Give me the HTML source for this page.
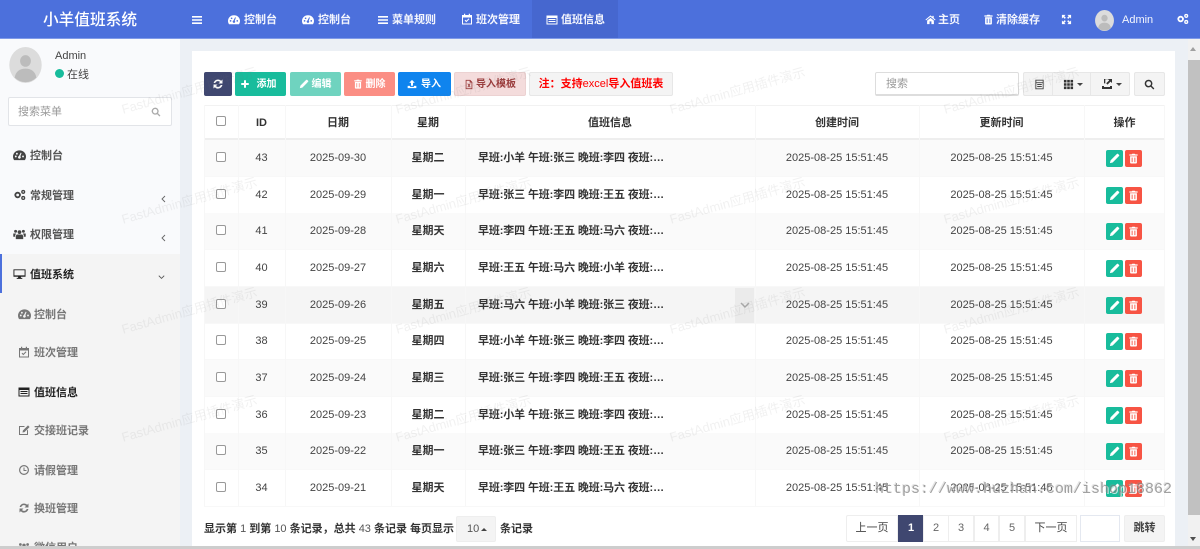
<!DOCTYPE html>
<html lang="zh-CN">
<head>
<meta charset="utf-8">
<title>小羊值班系统</title>
<style>
html,body{margin:0;padding:0;width:1200px;height:549px;overflow:hidden;background:#ecf0f5}
body{position:relative;font-family:"Liberation Sans","Noto Sans CJK SC",sans-serif;font-size:11px;color:#444}
.a,.r,.r span,.b,.h{position:absolute}
svg{position:absolute;fill:currentColor}
#hd{position:absolute;left:0;top:0;width:1200px;height:39px;background:#4c70dc;border-bottom:1px solid #7f9ae8;box-sizing:border-box;color:#fff}
#hd .h{top:12px;line-height:16px;font-size:11px;font-weight:700;white-space:nowrap;color:#f4f6fd}
#side{position:absolute;left:0;top:39px;width:180px;height:510px;background:#f9fafc;overflow:hidden}
.m{position:absolute;white-space:nowrap;font-size:11px;line-height:16px;font-weight:700;color:#555}
.sub{color:#777}
#panel{position:absolute;left:192px;top:51px;width:983px;height:495px;background:#fff}
.b{top:72px;height:24px;line-height:26px;border-radius:2px;text-align:center;color:#fff;font-weight:700;font-size:10px;box-sizing:border-box;white-space:nowrap}
.g{background:#f4f4f4;border:1px solid #e7e7e7;color:#444}
.r{left:204px;width:961px;height:37px;border-bottom:1px solid #f8f8f8;box-sizing:border-box}
.o{background:#fafafa}
.r span{top:0;line-height:37px;text-align:center;height:36px;font-size:11px;color:#444;white-space:nowrap}
.r .i{left:34px;width:47px}.r .d{left:81px;width:106px}.r .w{left:187px;width:74px;font-weight:700;color:#333}
.r .z{left:274px;width:200px;text-align:left;font-weight:700;color:#333;letter-spacing:-.13px}.r .c{left:551px;width:164px}.r .u{left:715px;width:165px}
.r .x{left:12px;top:12px;width:10px;height:10px;border:1px solid #999;border-radius:2px;box-sizing:border-box;background:#fff}
.r .e,.r .t{top:10px;width:17px;height:17px;border-radius:2px}
.r .e{left:902px;background:#18bc9c}.r .t{left:921px;background:#f75444}
.r .e svg,.r .t svg{left:3px;top:3px;color:#fff}
.v{position:absolute;top:105px;width:1px;height:401px;background:#f7f7f7}
.th{position:absolute;top:105px;height:35px;line-height:36px;text-align:center;font-weight:700;color:#333;font-size:11px}
.wm{position:absolute;font-size:13px;color:rgba(120,120,120,.10);transform:rotate(-15.700deg);transform-origin:0 50%;white-space:nowrap;line-height:16px;pointer-events:none}
.pg{position:absolute;top:515px;height:27px;line-height:24px;text-align:center;box-sizing:border-box;background:#fff;border:1px solid #eee;margin-left:-1px;color:#666;font-size:11px}
</style>
</head>
<body>
<svg width="0" height="0" style="position:absolute">
<defs>
<symbol id="dash" viewBox="0 0 14 12"><path d="M7 1a6.800 6.800 0 0 0-7 6.800c0 1.400.5 2.700 1.200 3.700h11.600c.7-1 1.200-2.300 1.200-3.700A6.800 6.800 0 0 0 7 1zM3 8.600a1 1 0 1 1 0-2 1 1 0 0 1 0 2zm1.200-3a1 1 0 1 1 0-2 1 1 0 0 1 0 2zM7 10a1.500 1.500 0 0 1-.6-2.900L8.300 3.400l.9.4-1.300 3.600A1.500 1.500 0 0 1 7 10zm3.800-1.400a1 1 0 1 1 0-2 1 1 0 0 1 0 2z"/></symbol>
<symbol id="bars" viewBox="0 0 12 12"><path d="M1 2h10v1.600H1zM1 5.200h10v1.600H1zM1 8.400h10V10H1z"/></symbol>
<symbol id="cal" viewBox="0 0 12 12"><path d="M1 2h2V.8h1.200V2h3.600V.8H9V2h2v9.500H1zM2 4.500v6h8v-6zM5.300 9.200 3.600 7.500l.7-.7 1 1 2.400-2.400.7.7z"/></symbol>
<symbol id="list" viewBox="0 0 12 12"><path fill-rule="evenodd" d="M.5 1.500h11v9H.5zM1.500 4v5.500h9V4zM2.500 5h7v1h-7zM2.500 7h7v1h-7z"/></symbol>
<symbol id="home" viewBox="0 0 12 12"><path d="M6 1.500 .5 6.200l.7.8L6 3l4.800 4 .7-.8L9.500 4.500V2H8v1.200zM2.300 7.200V11h2.700V8h2v3h2.700V7.200L6 4.200z"/></symbol>
<symbol id="trash" viewBox="0 0 12 12"><path fill-rule="evenodd" d="M4 1.500 4.700.8h2.600l.7.7h2.500v1.300h-9V1.500zM2.300 3.500h7.400v7.300l-.7.7H3l-.7-.7zM4 5v5h1V5zm3 0v5h1V5z"/></symbol>
<symbol id="exp" viewBox="0 0 12 12"><path d="M1 1h4L3.600 2.400 5.300 4.100 4.100 5.300 2.400 3.600 1 5zM11 1v4L9.600 3.600 7.900 5.300 6.700 4.100 8.400 2.400 7 1zM1 11V7l1.400 1.400 1.700-1.700 1.200 1.200-1.700 1.700L5 11zM11 11H7l1.400-1.400-1.700-1.700 1.200-1.200 1.700 1.700L11 7z"/></symbol>
<symbol id="cogs" viewBox="0 0 14 12"><path fill-rule="evenodd" d="M5 2.500a3.500 3.500 0 1 0 0 7 3.500 3.500 0 0 0 0-7zm0 2a1.500 1.500 0 1 1 0 3 1.500 1.500 0 0 1 0-3zM11 .5a2.200 2.200 0 1 0 0 4.400 2.200 2.200 0 0 0 0-4.400zm0 1.400a.8.800 0 1 1 0 1.600.8.800 0 0 1 0-1.600zM11 7a2.200 2.200 0 1 0 0 4.400A2.200 2.200 0 0 0 11 7zm0 1.400a.8.800 0 1 1 0 1.600.8.800 0 0 1 0-1.600z"/></symbol>
<symbol id="ref" viewBox="0 0 12 12"><path d="M6 1.500a4.500 4.500 0 0 1 3.200 1.300L10.500 1.500V5.500H6.500L8 4A2.800 2.800 0 0 0 3.300 5H1.600A4.500 4.500 0 0 1 6 1.500zM1.500 6.500h4L4 8a2.800 2.800 0 0 0 4.700-1h1.700a4.500 4.500 0 0 1-7.600 2.200L1.500 10.500z"/></symbol>
<symbol id="plus" viewBox="0 0 12 12"><path d="M4.800 1.500h2.400v3.300h3.300v2.400H7.200v3.300H4.800V7.200H1.500V4.800h3.300z"/></symbol>
<symbol id="pen" viewBox="0 0 12 12"><path d="M1 11l.7-3L8 1.700 10.300 4 4 10.300zM8.800 1l.7-.3 1.800 1.800-.3.700-.7.700-2.300-2.300z"/></symbol>
<symbol id="up" viewBox="0 0 12 12"><path d="M6 1l3.300 3.500H7.200v3.600H4.800V4.500H2.700zM.8 8.200h2.900v1.200h4.600V8.200h2.900v2.800H.8z"/></symbol>
<symbol id="xl" viewBox="0 0 12 12"><path fill-rule="evenodd" d="M2 .5h5.500L10 3v8.500H2zM3 1.500v9h6V3.800H6.800V1.500zM4 5h1.200L6 6.300 6.800 5H8L6.700 7.200 8 9.300H6.800L6 8 5.200 9.300H4l1.300-2.100z"/></symbol>
<symbol id="tbl" viewBox="0 0 12 12"><path fill-rule="evenodd" d="M1.500 .8h9v10.400h-9zM2.500 1.800v1.700h7V1.800zM2.500 4.500v5.700h7V4.500zM3.500 5.500h5v1h-5zM3.500 7.700h5v1h-5z"/></symbol>
<symbol id="th" viewBox="0 0 12 12"><path d="M1 1h2.800v2.800H1zM4.600 1h2.800v2.800H4.600zM8.200 1H11v2.800H8.200zM1 4.600h2.800v2.800H1zM4.600 4.600h2.800v2.800H4.600zM8.200 4.600H11v2.800H8.200zM1 8.200h2.800V11H1zM4.600 8.200h2.800V11H4.600zM8.200 8.200H11V11H8.200z"/></symbol>
<symbol id="exo" viewBox="0 0 12 12"><path d="M3 1h8v4L9.500 3.600 6.500 6.600 5.200 5.300 8.200 2.400 7 1.200H4.300v4.200H3zM1 8h2v1h6V8h2v3H1z"/></symbol>
<symbol id="srch" viewBox="0 0 12 12"><path fill-rule="evenodd" d="M5 .8a4.200 4.200 0 0 1 3.400 6.600l2.900 2.900-1.100 1.100-2.900-2.900A4.200 4.200 0 1 1 5 .8zm0 1.600a2.600 2.600 0 1 0 0 5.200 2.600 2.600 0 0 0 0-5.200z"/></symbol>
<symbol id="usrs" viewBox="0 0 14 12"><path d="M7 2a2 2 0 1 1 0 4 2 2 0 0 1 0-4zM2.800 1.500a1.600 1.600 0 1 1 0 3.200 1.600 1.600 0 0 1 0-3.200zM11.200 1.500a1.600 1.600 0 1 1 0 3.200 1.600 1.600 0 0 1 0-3.200zM4 6.500h6l1 1.500v3.500H3V8zM.3 5.500h3L2.300 7.500V9H.3zM10.700 5.500h3V9h-2V7.500z"/></symbol>
<symbol id="desk" viewBox="0 0 14 12"><path fill-rule="evenodd" d="M.5 1h13v8h-5v1.200h1.500v1H4v-1h1.500V9h-5zM1.500 2v5.500h11V2z"/></symbol>
<symbol id="edit" viewBox="0 0 12 12"><path d="M1 2h6L6 3H2v7h7V6.500l1-1V11H1zM4.500 8.500l.4-2L10 1.400l1.600 1.600L6.500 8.100z"/></symbol>
<symbol id="clk" viewBox="0 0 12 12"><path fill-rule="evenodd" d="M6 1a5 5 0 1 1 0 10A5 5 0 0 1 6 1zm0 1.200a3.800 3.800 0 1 0 0 7.600 3.800 3.800 0 0 0 0-7.600zM5.500 3.500h1V6H8.500v1h-3z"/></symbol>
<symbol id="avatar" viewBox="0 0 36 40"><ellipse cx="18" cy="20" rx="18" ry="20" fill="#dcdcdc"/><ellipse cx="18" cy="15.500" rx="6" ry="6.500" fill="#bcbcbc"/><path d="M6 34c1-7 6-10 12-10s11 3 12 10a18 20 0 0 1-24 0z" fill="#bcbcbc"/></symbol>
</defs>
</svg>

<div id="hd">
  <div class="a" style="left:0;top:2px;width:180px;height:36px;line-height:38px;text-align:center;font-size:15.700px;color:#fff;font-weight:500">小羊值班系统</div>
  <div class="a" style="left:532px;top:0;width:86px;height:38px;background:#4667cf"></div>
  <svg style="left:191px;top:14px" width="12" height="12"><use href="#bars"/></svg>
  <svg style="left:228px;top:14px" width="12" height="11"><use href="#dash"/></svg><div class="h" style="left:244px">控制台</div>
  <svg style="left:302px;top:14px" width="12" height="11"><use href="#dash"/></svg><div class="h" style="left:318px">控制台</div>
  <svg style="left:377px;top:14px" width="12" height="12"><use href="#bars"/></svg><div class="h" style="left:392px">菜单规则</div>
  <svg style="left:461px;top:13px" width="12" height="12"><use href="#cal"/></svg><div class="h" style="left:476px">班次管理</div>
  <svg style="left:546px;top:14px" width="12" height="12"><use href="#list"/></svg><div class="h" style="left:561px">值班信息</div>
  <svg style="left:925px;top:14px" width="11" height="11"><use href="#home"/></svg><div class="h" style="left:938px">主页</div>
  <svg style="left:983px;top:14px" width="11" height="11"><use href="#trash"/></svg><div class="h" style="left:996px">清除缓存</div>
  <svg style="left:1061px;top:14px" width="11" height="11"><use href="#exp"/></svg>
  <svg style="left:1095px;top:10px" width="19" height="21"><use href="#avatar"/></svg>
  <div class="h" style="left:1122px;font-weight:400">Admin</div>
  <svg style="left:1176px;top:13px" width="13" height="12"><use href="#cogs"/></svg>
</div>

<div id="side">
  <svg style="left:8px;top:8px" width="35" height="36"><use href="#avatar"/></svg>
  <div class="m" style="left:55px;top:9px;font-weight:400;color:#444">Admin</div>
  <div class="a" style="left:55px;top:30px;width:9px;height:9px;border-radius:50%;background:#18bc9c"></div>
  <div class="m" style="left:67px;top:28px;font-weight:400;color:#444">在线</div>
  <div class="a" style="left:8px;top:58px;width:164px;height:29px;background:#fff;border:1px solid #e2e4e8;border-radius:2px;box-sizing:border-box;line-height:29px;padding-left:9px;color:#999">搜索菜单</div>
  <svg style="left:151px;top:68px;color:#aaa" width="10" height="10"><use href="#srch"/></svg>

  <svg style="left:13px;top:110px" width="13" height="12"><use href="#dash"/></svg><div class="m" style="left:30px;top:109px">控制台</div>
  <svg style="left:13px;top:150px" width="13" height="12"><use href="#cogs"/></svg><div class="m" style="left:30px;top:149px">常规管理</div>
  <svg style="left:161px;top:156px;color:#666" width="5" height="8" viewBox="0 0 5 8"><path d="M4 1 1 4l3 3" fill="none" stroke="currentColor" stroke-width=".9"/></svg>
  <svg style="left:13px;top:189px" width="13" height="12"><use href="#usrs"/></svg><div class="m" style="left:30px;top:188px">权限管理</div>
  <svg style="left:161px;top:195px;color:#666" width="5" height="8" viewBox="0 0 5 8"><path d="M4 1 1 4l3 3" fill="none" stroke="currentColor" stroke-width=".9"/></svg>

  <div class="a" style="left:0;top:215px;width:180px;height:295px;background:#f4f4f4"></div>
  <div class="a" style="left:0;top:215px;width:2px;height:39px;background:#4c70dc"></div>
  <svg style="left:13px;top:229px;color:#222" width="13" height="12"><use href="#desk"/></svg><div class="m" style="left:30px;top:228px;color:#222">值班系统</div>
  <svg style="left:157px;top:234px;color:#555" width="9" height="9" viewBox="0 0 10 10"><path d="M2 3l3 3 3-3" fill="none" stroke="currentColor" stroke-width="1"/></svg>

  <svg style="left:18px;top:269px;color:#777" width="13" height="12"><use href="#dash"/></svg><div class="m sub" style="left:34px;top:268px">控制台</div>
  <svg style="left:18px;top:307px;color:#777" width="12" height="12"><use href="#cal"/></svg><div class="m sub" style="left:34px;top:306px">班次管理</div>
  <svg style="left:18px;top:347px;color:#222" width="12" height="12"><use href="#list"/></svg><div class="m" style="left:34px;top:346px;color:#222">值班信息</div>
  <svg style="left:18px;top:385px;color:#777" width="12" height="12"><use href="#edit"/></svg><div class="m sub" style="left:34px;top:384px">交接班记录</div>
  <svg style="left:18px;top:425px;color:#777" width="12" height="12"><use href="#clk"/></svg><div class="m sub" style="left:34px;top:424px">请假管理</div>
  <svg style="left:18px;top:463px;color:#777" width="12" height="12"><use href="#ref"/></svg><div class="m sub" style="left:34px;top:462px">换班管理</div>
  <svg style="left:18px;top:502px;color:#777" width="12" height="12"><use href="#usrs"/></svg><div class="m sub" style="left:34px;top:501px">微信用户</div>
</div>

<div id="panel"></div>

<!-- toolbar -->
<div class="b" style="left:204px;width:28px;background:#3f4770"><svg style="left:8px;top:6px" width="12" height="12"><use href="#ref"/></svg></div>
<div class="b" style="left:235px;width:51px;background:#18bc9c;padding-left:12px"><svg style="left:5px;top:7px" width="10" height="10"><use href="#plus"/></svg>添加</div>
<div class="b" style="left:290px;width:51px;background:#6fd3bf;padding-left:12px"><svg style="left:9px;top:7px" width="10" height="10"><use href="#pen"/></svg>编辑</div>
<div class="b" style="left:344px;width:51px;background:#fb8e84;padding-left:12px"><svg style="left:9px;top:7px" width="10" height="10"><use href="#trash"/></svg>删除</div>
<div class="b" style="left:398px;width:53px;background:#0f84ee;padding-left:13px"><svg style="left:9px;top:7px" width="10" height="10"><use href="#up"/></svg>导入</div>
<div class="b" style="left:454px;width:72px;background:#f4dcdc;border:1px solid #ecd2d2;color:#9b3c3c;padding-left:12px;line-height:24px"><svg style="left:9px;top:6px" width="10" height="11"><use href="#xl"/></svg>导入模板</div>
<div class="b" style="left:529px;width:144px;background:#f4f4f4;border:1px solid #e7e7e7;color:#f00;line-height:22px;font-size:11px">注：支持<span style="font-weight:400">excel</span>导入值班表</div>

<div class="b" style="left:875px;width:144px;background:#fff;border:1px solid #ddd;border-bottom-width:2px;color:#999;font-weight:400;text-align:left;padding-left:10px;line-height:22px;font-size:11px">搜索</div>
<div class="b g" style="left:1023px;width:30px;border-radius:2px 0 0 2px"><svg style="left:10px;top:6px;color:#444" width="11" height="11"><use href="#tbl"/></svg></div>
<div class="b g" style="left:1052px;width:39px;border-radius:0"><svg style="left:10px;top:6px;color:#333" width="11" height="11"><use href="#th"/></svg><div class="a" style="left:24px;top:10px;width:0;height:0;border:3px solid transparent;border-top:3px solid #444"></div></div>
<div class="b g" style="left:1090px;width:40px;border-radius:0 2px 2px 0"><svg style="left:10px;top:5px;color:#333" width="12" height="12"><use href="#exo"/></svg><div class="a" style="left:25px;top:10px;width:0;height:0;border:3px solid transparent;border-top:3px solid #444"></div></div>
<div class="b g" style="left:1134px;width:31px"><svg style="left:9px;top:6px;color:#333" width="11" height="11"><use href="#srch"/></svg></div>

<!-- table head -->
<div class="a" style="left:204px;top:105px;width:961px;height:35px;border-top:1px solid #f2f2f2;border-bottom:2px solid #eee;box-sizing:border-box;background:#fff"></div>
<div class="a" style="left:216px;top:116px;width:10px;height:10px;border:1px solid #999;border-radius:2px;box-sizing:border-box;background:#fff"></div>
<div class="th" style="left:238px;width:47px">ID</div>
<div class="th" style="left:285px;width:106px">日期</div>
<div class="th" style="left:391px;width:74px">星期</div>
<div class="th" style="left:465px;width:290px">值班信息</div>
<div class="th" style="left:755px;width:164px">创建时间</div>
<div class="th" style="left:919px;width:165px">更新时间</div>
<div class="th" style="left:1084px;width:81px">操作</div>

<!-- rows -->
<div class="r o" style="top:140px"><i class="x a"></i><span class="i">43</span><span class="d">2025-09-30</span><span class="w">星期二</span><span class="z">早班:小羊 午班:张三 晚班:李四 夜班:…</span><span class="c">2025-08-25 15:51:45</span><span class="u">2025-08-25 15:51:45</span><i class="e a"><svg width="11" height="11"><use href="#pen"/></svg></i><i class="t a"><svg width="11" height="11"><use href="#trash"/></svg></i></div>
<div class="r" style="top:177px"><i class="x a"></i><span class="i">42</span><span class="d">2025-09-29</span><span class="w">星期一</span><span class="z">早班:张三 午班:李四 晚班:王五 夜班:…</span><span class="c">2025-08-25 15:51:45</span><span class="u">2025-08-25 15:51:45</span><i class="e a"><svg width="11" height="11"><use href="#pen"/></svg></i><i class="t a"><svg width="11" height="11"><use href="#trash"/></svg></i></div>
<div class="r o" style="top:213px"><i class="x a"></i><span class="i">41</span><span class="d">2025-09-28</span><span class="w">星期天</span><span class="z">早班:李四 午班:王五 晚班:马六 夜班:…</span><span class="c">2025-08-25 15:51:45</span><span class="u">2025-08-25 15:51:45</span><i class="e a"><svg width="11" height="11"><use href="#pen"/></svg></i><i class="t a"><svg width="11" height="11"><use href="#trash"/></svg></i></div>
<div class="r" style="top:250px"><i class="x a"></i><span class="i">40</span><span class="d">2025-09-27</span><span class="w">星期六</span><span class="z">早班:王五 午班:马六 晚班:小羊 夜班:…</span><span class="c">2025-08-25 15:51:45</span><span class="u">2025-08-25 15:51:45</span><i class="e a"><svg width="11" height="11"><use href="#pen"/></svg></i><i class="t a"><svg width="11" height="11"><use href="#trash"/></svg></i></div>
<div class="r" style="top:287px;background:#f5f5f5"><i class="x a"></i><span class="i">39</span><span class="d">2025-09-26</span><span class="w">星期五</span><span class="z">早班:马六 午班:小羊 晚班:张三 夜班:…</span><span class="c">2025-08-25 15:51:45</span><span class="u">2025-08-25 15:51:45</span><i class="e a"><svg width="11" height="11"><use href="#pen"/></svg></i><i class="t a"><svg width="11" height="11"><use href="#trash"/></svg></i><i class="a" style="left:531px;top:1px;width:19px;height:35px;background:#ebebeb"><svg style="left:5px;top:12px;color:#aaa" width="10" height="10" viewBox="0 0 10 10"><path d="M1 3l4 4 4-4" fill="none" stroke="currentColor" stroke-width="1.500"/></svg></i></div>
<div class="r" style="top:323px"><i class="x a"></i><span class="i">38</span><span class="d">2025-09-25</span><span class="w">星期四</span><span class="z">早班:小羊 午班:张三 晚班:李四 夜班:…</span><span class="c">2025-08-25 15:51:45</span><span class="u">2025-08-25 15:51:45</span><i class="e a"><svg width="11" height="11"><use href="#pen"/></svg></i><i class="t a"><svg width="11" height="11"><use href="#trash"/></svg></i></div>
<div class="r o" style="top:360px"><i class="x a"></i><span class="i">37</span><span class="d">2025-09-24</span><span class="w">星期三</span><span class="z">早班:张三 午班:李四 晚班:王五 夜班:…</span><span class="c">2025-08-25 15:51:45</span><span class="u">2025-08-25 15:51:45</span><i class="e a"><svg width="11" height="11"><use href="#pen"/></svg></i><i class="t a"><svg width="11" height="11"><use href="#trash"/></svg></i></div>
<div class="r" style="top:397px"><i class="x a"></i><span class="i">36</span><span class="d">2025-09-23</span><span class="w">星期二</span><span class="z">早班:小羊 午班:张三 晚班:李四 夜班:…</span><span class="c">2025-08-25 15:51:45</span><span class="u">2025-08-25 15:51:45</span><i class="e a"><svg width="11" height="11"><use href="#pen"/></svg></i><i class="t a"><svg width="11" height="11"><use href="#trash"/></svg></i></div>
<div class="r o" style="top:433px"><i class="x a"></i><span class="i">35</span><span class="d">2025-09-22</span><span class="w">星期一</span><span class="z">早班:张三 午班:李四 晚班:王五 夜班:…</span><span class="c">2025-08-25 15:51:45</span><span class="u">2025-08-25 15:51:45</span><i class="e a"><svg width="11" height="11"><use href="#pen"/></svg></i><i class="t a"><svg width="11" height="11"><use href="#trash"/></svg></i></div>
<div class="r" style="top:470px"><i class="x a"></i><span class="i">34</span><span class="d">2025-09-21</span><span class="w">星期天</span><span class="z">早班:李四 午班:王五 晚班:马六 夜班:…</span><span class="c">2025-08-25 15:51:45</span><span class="u">2025-08-25 15:51:45</span><i class="e a"><svg width="11" height="11"><use href="#pen"/></svg></i><i class="t a"><svg width="11" height="11"><use href="#trash"/></svg></i></div>

<div class="v" style="left:204px"></div><div class="v" style="left:238px"></div><div class="v" style="left:285px"></div><div class="v" style="left:391px"></div><div class="v" style="left:465px"></div><div class="v" style="left:755px"></div><div class="v" style="left:919px"></div><div class="v" style="left:1084px"></div><div class="v" style="left:1164px"></div>

<!-- footer -->
<div class="a" style="left:204px;top:521px;line-height:16px;white-space:nowrap;font-weight:700;color:#333">显示第 <span style="font-weight:400;color:#555">1</span> 到第 <span style="font-weight:400;color:#555">10</span> 条记录，总共 <span style="font-weight:400;color:#555">43</span> 条记录 每页显示</div>
<div class="a" style="left:456px;top:516px;width:40px;height:26px;background:#f4f4f4;border:1px solid #eee;border-radius:2px;box-sizing:border-box;line-height:24px;padding-left:10px;color:#555">10<span class="a" style="left:24px;top:8px;width:0;height:0;border:3px solid transparent;border-bottom:3px solid #444"></span></div>
<div class="a" style="left:500px;top:521px;line-height:16px;white-space:nowrap;font-weight:700;color:#333">条记录</div>

<div class="pg" style="left:847px;width:52px;color:#444;border-radius:2px 0 0 2px">上一页</div>
<div class="pg" style="left:899px;width:26px;background:#3f4770;border-color:#3f4770;color:#fff;font-weight:700">1</div>
<div class="pg" style="left:924px;width:26px">2</div>
<div class="pg" style="left:949px;width:26px">3</div>
<div class="pg" style="left:975px;width:25px">4</div>
<div class="pg" style="left:1000px;width:26px">5</div>
<div class="pg" style="left:1026px;width:52px;color:#444">下一页</div>
<div class="pg" style="left:1080px;width:40px;border-color:#e4e8f0;margin:0"></div>
<div class="pg" style="left:1124px;width:41px;background:#f4f4f4;margin:0;color:#444;font-weight:700;border-radius:2px">跳转</div>

<!-- watermarks -->
<div class="wm" style="left:122px;top:102px">FastAdmin应用插件演示</div>
<div class="wm" style="left:396px;top:102px">FastAdmin应用插件演示</div>
<div class="wm" style="left:670px;top:102px">FastAdmin应用插件演示</div>
<div class="wm" style="left:944px;top:102px">FastAdmin应用插件演示</div>
<div class="wm" style="left:122px;top:212px">FastAdmin应用插件演示</div>
<div class="wm" style="left:396px;top:212px">FastAdmin应用插件演示</div>
<div class="wm" style="left:670px;top:212px">FastAdmin应用插件演示</div>
<div class="wm" style="left:944px;top:212px">FastAdmin应用插件演示</div>
<div class="wm" style="left:122px;top:322px">FastAdmin应用插件演示</div>
<div class="wm" style="left:396px;top:322px">FastAdmin应用插件演示</div>
<div class="wm" style="left:670px;top:322px">FastAdmin应用插件演示</div>
<div class="wm" style="left:944px;top:322px">FastAdmin应用插件演示</div>
<div class="wm" style="left:122px;top:430px">FastAdmin应用插件演示</div>
<div class="wm" style="left:396px;top:430px">FastAdmin应用插件演示</div>
<div class="wm" style="left:670px;top:430px">FastAdmin应用插件演示</div>
<div class="wm" style="left:944px;top:430px">FastAdmin应用插件演示</div>

<!-- scrollbars -->
<div class="a" style="left:1188px;top:39px;width:12px;height:510px;background:#f1f1f1"></div>
<div class="a" style="left:1188px;top:60px;width:12px;height:455px;background:#c1c1c1"></div>
<div class="a" style="left:1190px;top:44px;width:0;height:0;border:3.500px solid transparent;border-bottom:4px solid #a0a0a0"></div>
<div class="a" style="left:1190px;top:537px;width:0;height:0;border:3.500px solid transparent;border-top:4px solid #505050"></div>
<div class="a" style="left:0;top:546px;width:1200px;height:3px;background:#cdcdcd"></div>

<div class="a" style="left:875px;top:480px;font-family:'Liberation Mono',monospace;font-size:15px;line-height:20px;white-space:nowrap;color:rgba(130,130,130,.75);text-shadow:1px 1px 0 rgba(255,255,255,.7),-1px -1px 0 rgba(150,150,150,.25)">https://www.huzhan.com/ishop18862</div>
</body>
</html>
